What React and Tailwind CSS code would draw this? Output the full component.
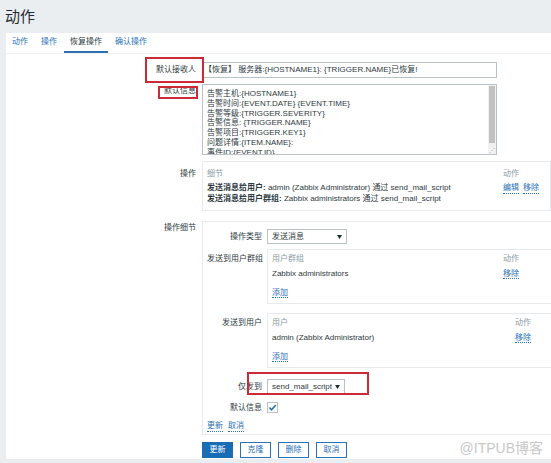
const LINK = "text-[#2a72b8] border-b border-dotted border-[#2a72b8]";

const Caret = () => (
  <svg width="5" height="4" viewBox="0 0 5 4">
    <polygon points="0,0 5,0 2.5,4" fill="#1f2c33" />
  </svg>
);

const Select = ({ value, width }) => (
  <div className={`${width} h-[15px] border border-[#b8c2c8] bg-white flex items-center justify-between pl-[4px] pr-[4px] whitespace-nowrap`}>
    <span>{value}</span>
    <Caret />
  </div>
);

const Row = ({ label, labelClass = "", className = "", children }) => (
  <div className={`flex gap-[6px] ${className}`}>
    <div className={`relative w-[190px] shrink-0 text-right whitespace-nowrap ${labelClass}`}>{label}</div>
    {children}
  </div>
);

const SubRow = ({ label, labelClass = "", className = "", children }) => (
  <div className={`relative flex gap-[5px] ${className}`}>
    <div className={`w-[55px] shrink-0 text-right whitespace-nowrap ${labelClass}`}>{label}</div>
    {children}
  </div>
);

const ListBox = ({ head, item, col }) => (
  <div className="w-[300px] border border-[#e6eaec] pl-[4px] pt-[4px] pb-[5px]">
    <div className="flex text-[#8a9ba4]">
      <div className={col}>{head}</div>
      <div>动作</div>
    </div>
    <div className="flex mt-[5px]">
      <div className={col}>{item}</div>
      <div>
        <span className={LINK}>移除</span>
      </div>
    </div>
    <div className="mt-[9px]">
      <span className={LINK}>添加</span>
    </div>
  </div>
);

const message = [
  "告警主机:{HOSTNAME1}",
  "告警时间:{EVENT.DATE} {EVENT.TIME}",
  "告警等级:{TRIGGER.SEVERITY}",
  "告警信息: {TRIGGER.NAME}",
  "告警项目:{TRIGGER.KEY1}",
  "问题详情:{ITEM.NAME}:",
  "事件ID:{EVENT.ID}",
];

export default function App() {
  return (
    <div className="h-screen w-full overflow-hidden bg-[#ebeef0] font-['Liberation_Sans','Noto_Sans_CJK_SC',sans-serif] text-[8px] leading-[10px] text-[#2e3a41]">
      {/* Header */}
      <div className="h-[33px] flex items-center pl-[5px] text-[15px] leading-none text-[#1f2c33]">动作</div>

      <div className="relative ml-[6px] h-[426px] bg-white">
        {/* Tabs */}
        <div className="flex gap-[1px] h-[21px] border-b border-[#f0f2f3]">
          <div className="px-[6px] h-[20px] flex items-center pb-[2px] text-[#2a72b8]">动作</div>
          <div className="px-[6px] h-[20px] flex items-center pb-[2px] text-[#2a72b8]">操作</div>
          <div className="px-[6px] h-[20px] flex items-center border-b-2 border-[#2f6fb3]">恢复操作</div>
          <div className="px-[6px] h-[20px] flex items-center pb-[2px] text-[#2a72b8]">确认操作</div>
        </div>

        <div className="pt-[8px]">
          {/* 默认接收人 */}
          <Row
            className="items-center"
            label={
              <>
                默认接收人
                <div className="absolute left-[139px] top-[-8px] w-[59px] h-[26px] border-2 border-[#cc2a36]" />
              </>
            }
          >
            <div className="w-[295px] h-[16px] border border-[#b8c2c8] flex items-center pl-[1px] whitespace-nowrap">
              【恢复】 服务器:{"{HOSTNAME1}"}: {"{TRIGGER.NAME}"}已恢复!
            </div>
          </Row>

          {/* 默认信息 */}
          <Row
            className="mt-[6px]"
            labelClass="pt-[2px]"
            label={
              <>
                默认信息
                <div className="absolute left-[152px] top-[2px] w-[40px] h-[13px] border-2 border-[#cc2a36]" />
              </>
            }
          >
            <div className="w-[295px] h-[71px] border border-[#b8c2c8] flex overflow-hidden">
              <div className="flex-1 pl-[4px] pt-[4px] leading-[9.8px] whitespace-nowrap">
                {message.map((m) => (
                  <div key={m}>{m}</div>
                ))}
              </div>
              <div className="w-[8px] bg-[#f1f1f1] flex flex-col justify-between p-[1px]">
                <div className="h-[57px] bg-[#c1c1c1]" />
                <div className="h-[6px] text-[#aaa] text-[6px] leading-[6px] text-right">⋰</div>
              </div>
            </div>
          </Row>

          {/* 操作 */}
          <Row className="mt-[6px]" labelClass="pt-[8px]" label="操作">
            <div className="w-[360px] border border-[#e6eaec] pl-[4px] pt-[7px] pb-[6px]">
              <div className="flex text-[#8a9ba4]">
                <div className="w-[296px]">细节</div>
                <div>动作</div>
              </div>
              <div className="flex mt-[3px] leading-[11px] whitespace-nowrap">
                <div className="w-[296px]">
                  <div>
                    <b>发送消息给用户:</b> admin (Zabbix Administrator) 通过 send_mail_script
                  </div>
                  <div>
                    <b>发送消息给用户群组:</b> Zabbix administrators 通过 send_mail_script
                  </div>
                </div>
                <div className="flex gap-[4px] items-start">
                  <span className={LINK}>编辑</span>
                  <span className={LINK}>移除</span>
                </div>
              </div>
            </div>
          </Row>

          {/* 操作细节 */}
          <Row className="mt-[10px]" labelClass="pt-[2px]" label="操作细节">
            <div className="w-[360px] border border-[#e6eaec] pl-[4px] pt-[7px] pb-[2px]">
              <SubRow className="items-center" label="操作类型">
                <Select value="发送消息" width="w-[80px]" />
              </SubRow>

              <SubRow className="mt-[5px]" labelClass="pt-[5px]" label="发送到用户群组">
                <ListBox head="用户群组" item="Zabbix administrators" col="w-[231px]" />
              </SubRow>

              <SubRow className="mt-[9px]" labelClass="pt-[5px]" label="发送到用户">
                <ListBox head="用户" item="admin (Zabbix Administrator)" col="w-[243px]" />
              </SubRow>

              <SubRow className="mt-[11px] items-center" label="仅发到">
                <Select value="send_mail_script" width="w-[78px]" />
                <div className="absolute left-[40px] top-[-7px] w-[122px] h-[23px] border-2 border-[#cc2a36]" />
              </SubRow>

              <SubRow className="mt-[8px] items-center" label="默认信息">
                <div className="w-[11px] h-[11px] border border-[#b8c2c8] flex items-center justify-center">
                  <svg width="9" height="9" viewBox="0 0 9 9">
                    <polyline points="1.5,4.5 3.5,6.8 7.8,2" fill="none" stroke="#1f6fb5" strokeWidth="1.5" />
                  </svg>
                </div>
              </SubRow>

              <div className="mt-[8px] flex gap-[5px]">
                <span className={LINK}>更新</span>
                <span className={LINK}>取消</span>
              </div>
            </div>
          </Row>

          {/* Buttons */}
          <div className="mt-[7px] ml-[196px] flex gap-[7px]">
            <div className="w-[31px] h-[16px] flex items-center justify-center bg-[#1a6db5] border border-[#1a6db5] text-white">更新</div>
            <div className="w-[31px] h-[16px] flex items-center justify-center border border-[#2a72b8] text-[#2a72b8]">克隆</div>
            <div className="w-[31px] h-[16px] flex items-center justify-center border border-[#2a72b8] text-[#2a72b8]">删除</div>
            <div className="w-[31px] h-[16px] flex items-center justify-center border border-[#2a72b8] text-[#2a72b8]">取消</div>
          </div>
        </div>

        <div className="absolute right-[8px] bottom-[4px] text-[14px] leading-[14px] text-[#c8c8c8]">@ITPUB博客</div>
      </div>
    </div>
  );
}
